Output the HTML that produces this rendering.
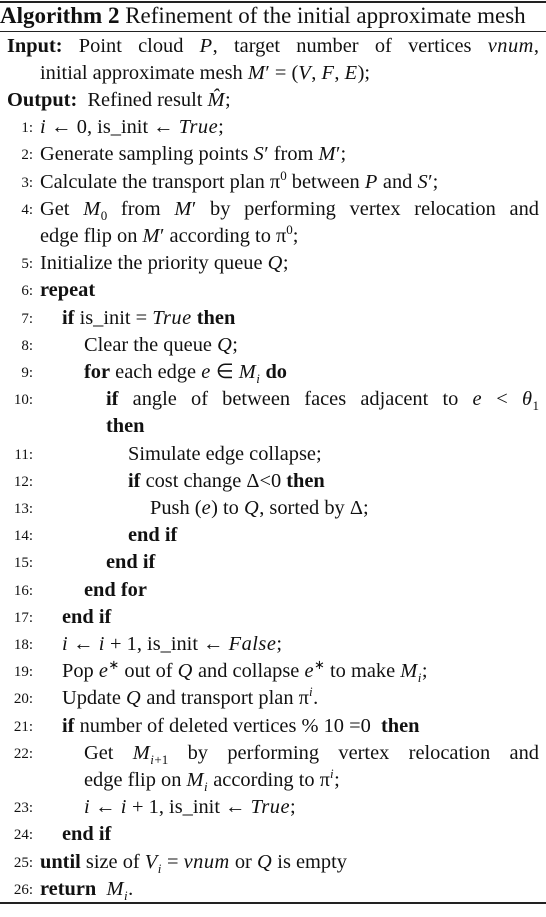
<!DOCTYPE html>
<html><head><meta charset="utf-8"><style>
html,body{margin:0;padding:0;background:#fff;}
body{width:546px;height:917px;position:relative;overflow:hidden;font-family:"Liberation Serif",serif;font-size:20.4px;color:#111;}
.r{position:absolute;height:27px;line-height:27px;white-space:nowrap;}
.n{position:absolute;left:0;width:33px;text-align:right;font-size:15px;height:27px;line-height:28px;}
.j{text-align:justify;text-align-last:justify;right:7px;}
.rule{position:absolute;left:0;width:546px;background:#222;}
sub,sup{font-size:13px;line-height:0;}
i{letter-spacing:0.5px;}
</style></head><body>
<div class="rule" style="top:1px;height:2px"></div>
<div class="rule" style="top:31px;height:1px"></div>
<div class="rule" style="top:902px;height:2px"></div>
<div class="r" style="top:2px;left:0;font-size:23px;"><b>Algorithm 2</b> Refinement of the initial approximate mesh</div>

<div class="r j" style="top:33px;left:7px"><b>Input:</b> Point cloud <i>P</i>, target number of vertices <i>vnum</i>,</div>
<div class="r" style="top:60px;left:40px">initial approximate mesh <i>M</i>′ = (<i>V</i>, <i>F</i>, <i>E</i>);</div>
<div class="r" style="top:87px;left:7px"><b>Output:</b>&nbsp; Refined result <i>M̂</i>;</div>

<div class="n" style="top:114px">1:</div><div class="r" style="top:114px;left:40px"><i>i</i> ← 0, is_init ← <i>True</i>;</div>
<div class="n" style="top:141px">2:</div><div class="r" style="top:141px;left:40px">Generate sampling points <i>S</i>′ from <i>M</i>′;</div>
<div class="n" style="top:169px">3:</div><div class="r" style="top:169px;left:40px">Calculate the transport plan π<sup>0</sup> between <i>P</i> and <i>S</i>′;</div>
<div class="n" style="top:196px">4:</div><div class="r j" style="top:196px;left:40px">Get <i>M</i><sub>0</sub> from <i>M</i>′ by performing vertex relocation and</div>
<div class="r" style="top:223px;left:40px">edge flip on <i>M</i>′ according to π<sup>0</sup>;</div>
<div class="n" style="top:250px">5:</div><div class="r" style="top:250px;left:40px">Initialize the priority queue <i>Q</i>;</div>
<div class="n" style="top:277px">6:</div><div class="r" style="top:277px;left:40px"><b>repeat</b></div>
<div class="n" style="top:305px">7:</div><div class="r" style="top:305px;left:62px"><b>if</b> is_init = <i>True</i> <b>then</b></div>
<div class="n" style="top:332px">8:</div><div class="r" style="top:332px;left:84px">Clear the queue <i>Q</i>;</div>
<div class="n" style="top:359px">9:</div><div class="r" style="top:359px;left:84px"><b>for</b> each edge <i>e</i> ∈ <i>M<sub>i</sub></i> <b>do</b></div>
<div class="n" style="top:386px">10:</div><div class="r j" style="top:386px;left:106px"><b>if</b> angle of between faces adjacent to <i>e</i> &lt; <i>θ</i><sub>1</sub></div>
<div class="r" style="top:413px;left:106px"><b>then</b></div>
<div class="n" style="top:441px">11:</div><div class="r" style="top:441px;left:128px">Simulate edge collapse;</div>
<div class="n" style="top:468px">12:</div><div class="r" style="top:468px;left:128px"><b>if</b> cost change Δ&lt;0 <b>then</b></div>
<div class="n" style="top:495px">13:</div><div class="r" style="top:495px;left:150px">Push (<i>e</i>) to <i>Q</i>, sorted by Δ;</div>
<div class="n" style="top:522px">14:</div><div class="r" style="top:522px;left:128px"><b>end if</b></div>
<div class="n" style="top:549px">15:</div><div class="r" style="top:549px;left:106px"><b>end if</b></div>
<div class="n" style="top:577px">16:</div><div class="r" style="top:577px;left:84px"><b>end for</b></div>
<div class="n" style="top:604px">17:</div><div class="r" style="top:604px;left:62px"><b>end if</b></div>
<div class="n" style="top:631px">18:</div><div class="r" style="top:631px;left:62px"><i>i</i> ← <i>i</i> + 1, is_init ← <i>False</i>;</div>
<div class="n" style="top:658px">19:</div><div class="r" style="top:658px;left:62px">Pop <i>e</i><sup>∗</sup> out of <i>Q</i> and collapse <i>e</i><sup>∗</sup> to make <i>M<sub>i</sub></i>;</div>
<div class="n" style="top:685px">20:</div><div class="r" style="top:685px;left:62px">Update <i>Q</i> and transport plan π<sup><i>i</i></sup>.</div>
<div class="n" style="top:713px">21:</div><div class="r" style="top:713px;left:62px"><b>if</b> number of deleted vertices % 10 =0&nbsp; <b>then</b></div>
<div class="n" style="top:740px">22:</div><div class="r j" style="top:740px;left:84px">Get <i>M</i><sub><i>i</i>+1</sub> by performing vertex relocation and</div>
<div class="r" style="top:767px;left:84px">edge flip on <i>M<sub>i</sub></i> according to π<sup><i>i</i></sup>;</div>
<div class="n" style="top:794px">23:</div><div class="r" style="top:794px;left:84px"><i>i</i> ← <i>i</i> + 1, is_init ← <i>True</i>;</div>
<div class="n" style="top:821px">24:</div><div class="r" style="top:821px;left:62px"><b>end if</b></div>
<div class="n" style="top:849px">25:</div><div class="r" style="top:849px;left:40px"><b>until</b> size of <i>V<sub>i</sub></i> = <i>vnum</i> or <i>Q</i> is empty</div>
<div class="n" style="top:876px">26:</div><div class="r" style="top:876px;left:40px"><b>return</b>&nbsp; <i>M<sub>i</sub></i>.</div>
</body></html>
